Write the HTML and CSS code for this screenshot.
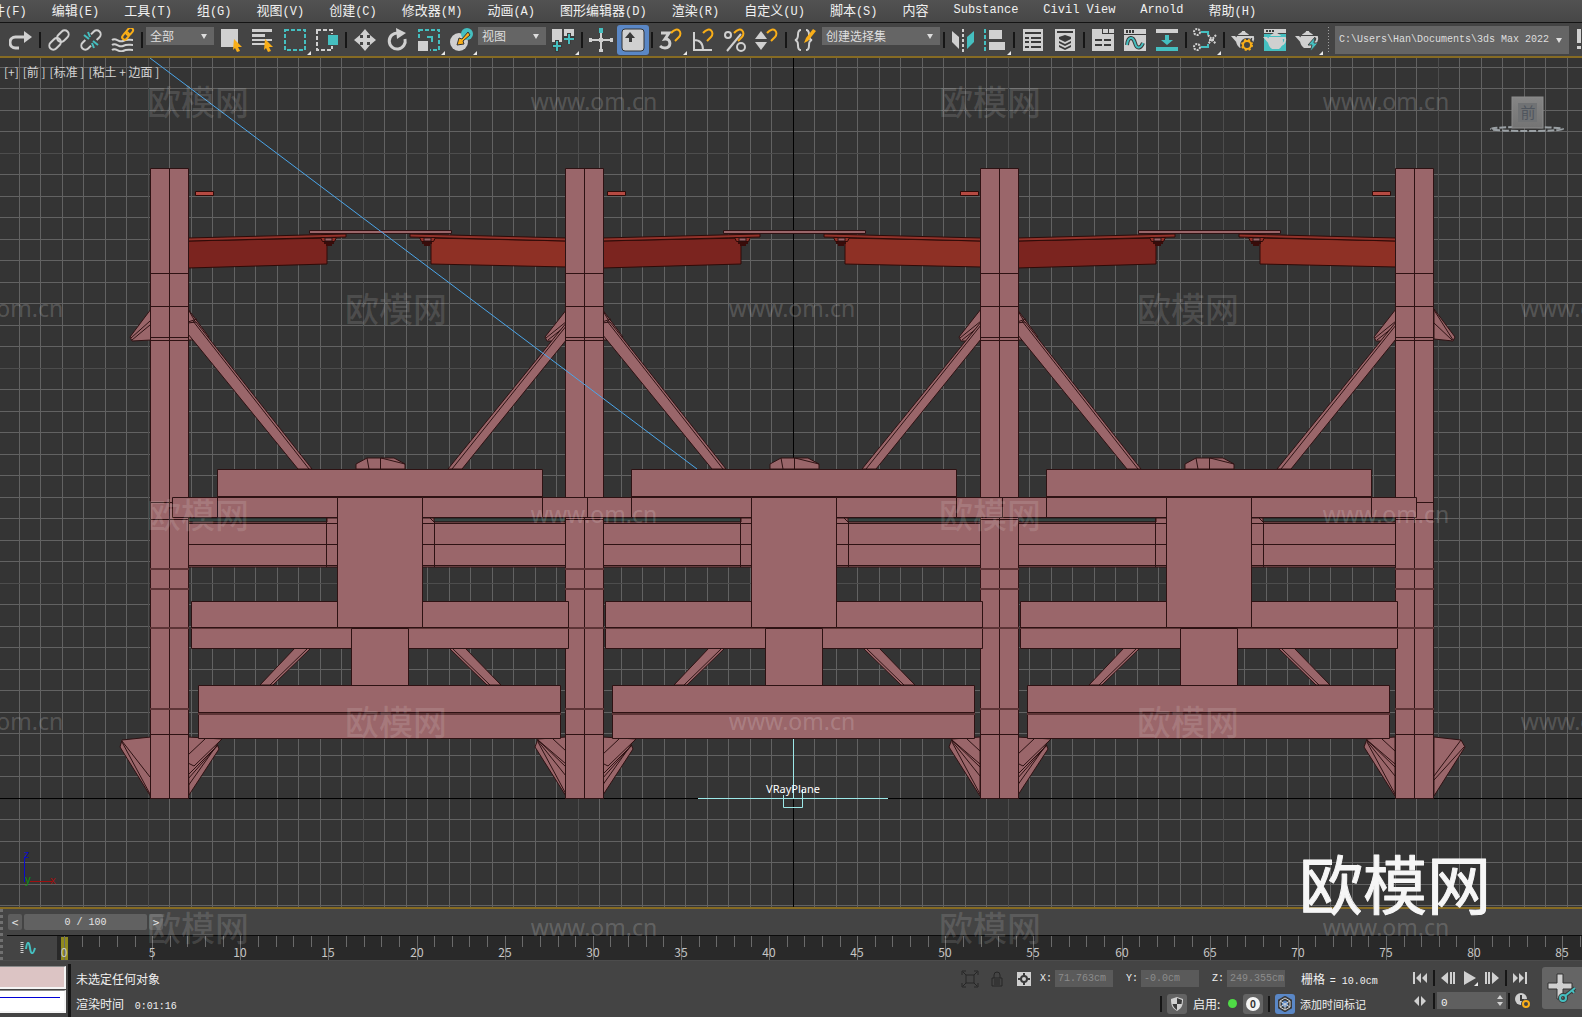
FILE: index.html
```
<!DOCTYPE html>
<html lang="zh-CN">
<head>
    <meta charset="UTF-8" />
    <meta name="viewport" content="width=device-width, initial-scale=1.0" />
    <title>3ds Max 2022</title>
    <link rel="stylesheet" href="styles.css">
</head>
<body>
    <nav class="menubar">
        <a href="#">文件<span>(F)</span></a>
        <a href="#">编辑<span>(E)</span></a>
        <a href="#">工具<span>(T)</span></a>
        <a href="#">组<span>(G)</span></a>
        <a href="#">视图<span>(V)</span></a>
        <a href="#">创建<span>(C)</span></a>
        <a href="#">修改器<span>(M)</span></a>
        <a href="#">动画<span>(A)</span></a>
        <a href="#">图形编辑器<span>(D)</span></a>
        <a href="#">渲染<span>(R)</span></a>
        <a href="#">自定义<span>(U)</span></a>
        <a href="#">脚本<span>(S)</span></a>
        <a href="#">内容</a>
        <a href="#" class="latin">Substance</a>
        <a href="#" class="latin">Civil View</a>
        <a href="#" class="latin">Arnold</a>
        <a href="#">帮助<span>(H)</span></a>
    </nav>

    <div class="toolbar">
        <button class="tool" aria-label="重做"><svg viewBox="0 0 24 24"><path class="ln3" d="M10 20H6.500a4.500 4.500 0 0 1 0-11H16"/><path class="lt" d="M15 3l8 6-8 6z"/></svg></button>
        <i class="sep"></i>
        <button class="tool" aria-label="链接"><svg viewBox="0 0 24 24"><g class="ln2" transform="rotate(-45 12 12)"><rect x="0" y="8" width="13" height="8" rx="4"/><rect x="11" y="8" width="13" height="8" rx="4"/></g></svg></button>
        <button class="tool" aria-label="取消链接"><svg viewBox="0 0 24 24"><g class="ln2" transform="rotate(-45 12 12)"><path d="M8 8H4a4 4 0 0 0 0 8h4M16 8h4a4 4 0 0 1 0 8h-4"/></g><path class="tl2" d="M5 7l5 4M9 4l2 5M19 17l-5-4M15 20l-2-5"/></svg></button>
        <button class="tool" aria-label="绑定到空间扭曲"><svg viewBox="0 0 24 24"><path class="ln2" d="M1 12c4-3 7 3 11 1s6-1 10-1M1 17c4-3 7 3 11 1s6-1 10-1M1 22c4-3 7 3 11 1s6-1 10-1"/><g class="or2" transform="rotate(-50 17 6)"><rect x="10" y="3" width="8" height="5" rx="2.500"/><rect x="16" y="3" width="8" height="5" rx="2.500"/></g></svg></button>
        <i class="sep"></i>
        <div class="drop drop-small"><select aria-label="选择过滤器"><option>全部</option></select></div>
        <button class="tool" aria-label="选择对象"><svg viewBox="0 0 24 24"><path class="lt" d="M2 1h17v18H2z"/><path class="or" d="M15 11l8 8h-4l2 4-3 1-2-4-2 2z"/></svg></button>
        <button class="tool" aria-label="按名称选择"><svg viewBox="0 0 24 24"><path class="lt" d="M1 1h20v3H1zM1 6h13v3H1zM1 11h20v2H1zM1 15h13v2H1z"/><path class="or" d="M14 11l8 8h-4l2 4-3 1-2-4-2 2z"/></svg></button>
        <button class="tool corner" aria-label="矩形选择区域"><svg viewBox="0 0 24 24"><path class="tl2" stroke-dasharray="4 2" d="M2 2h20v20H2z"/></svg></button>
        <button class="tool" aria-label="窗口/交叉"><svg viewBox="0 0 24 24"><path class="ln2" stroke-dasharray="4 2" d="M2 2h15v20H2z"/><path class="bg" d="M11 6h12v12H11z"/><path class="tl" d="M13 7h10v10H13z"/></svg></button>
        <i class="sep"></i>
        <button class="tool" aria-label="选择并移动"><svg viewBox="0 0 24 24"><path class="lt" d="M12 1l5 6h-3v3h3V7l6 5-6 5v-3h-3v3h3l-5 6-5-6h3v-3H7v3l-6-5 6-5v3h3V7H7z"/></svg></button>
        <button class="tool" aria-label="选择并旋转"><svg viewBox="0 0 24 24"><path class="ln3" d="M20 11a8 8 0 1 1-7-6"/><path class="lt" d="M11 0l10 5-9 6z"/></svg></button>
        <button class="tool corner" aria-label="选择并缩放"><svg viewBox="0 0 24 24"><path class="tl2" stroke-dasharray="4 2" d="M2 2h20v20H2z"/><path class="bg" d="M0 12h13v12H0z"/><path class="lt" d="M1 13h10v10H1z"/><path class="tl2" d="M10 9h5v5"/></svg></button>
        <button class="tool corner" aria-label="选择并放置"><svg viewBox="0 0 24 24"><circle class="lt" cx="10" cy="14" r="9"/><circle class="tl" cx="18" cy="6" r="6"/><path class="or" stroke="#333" d="M19 4l2 3-7 6 1 3-7 1 2-7 3 1z"/></svg></button>
        <div class="drop drop-small"><select aria-label="参考坐标系"><option>视图</option></select></div>
        <button class="tool corner" aria-label="使用轴点中心"><svg viewBox="0 0 24 24"><path class="lt" d="M1 1h10v13H1zM13 1h10v10H13z"/><path class="dk4" d="M6 12v12M1 18h10M18 5v11M12 10h12"/><path class="tl2" d="M6 13v10M2 18h8M18 6v10M13 11h10"/></svg></button>
        <i class="sep"></i>
        <button class="tool" aria-label="选择并操纵"><svg viewBox="0 0 24 24"><path class="ln2" d="M12 4v19M1 12h22"/><path class="lt" d="M10 10h4v4h-4zM0 10h3v4H0zM21 10h3v4h-3zM10 21h4v3h-4z"/><path class="tl" d="M10 0h4v5h-4z"/></svg></button>
        <button class="tool active" aria-label="键盘快捷键覆盖"><svg viewBox="0 0 24 24"><rect class="lt" x="1" y="1" width="22" height="22" rx="3" stroke="#333"/><path class="dk" d="M9 4l5 6h-3v4H8v-4H4z"/></svg></button>
        <i class="sep"></i>
        <button class="tool corner" aria-label="捕捉开关"><svg viewBox="0 0 24 24"><path class="ln3" d="M2 5h8l-4 6c6-1 7 9 0 9-2 0-4-1-5-2"/><path class="or2" d="M12 5c7-8 12 0 8 4l-4 4"/></svg></button>
        <button class="tool" aria-label="角度捕捉"><svg viewBox="0 0 24 24"><path class="ln2" d="M3 4v18h18M3 12c6 0 9 4 9 10"/><path class="or2" d="M12 5c7-8 12 0 8 4l-4 4"/></svg></button>
        <button class="tool" aria-label="百分比捕捉"><svg viewBox="0 0 24 24"><circle class="ln2" cx="5" cy="7" r="3"/><circle class="ln2" cx="18" cy="19" r="4"/><path class="ln2" d="M18 6L4 23"/><path class="or2" d="M11 5c7-8 12 0 8 4l-4 4"/></svg></button>
        <button class="tool" aria-label="微调器捕捉"><svg viewBox="0 0 24 24"><path class="lt" d="M6 3l6 8H0zM6 22l6-8H0z"/><path class="or2" d="M12 5c7-8 12 0 8 4l-4 4"/></svg></button>
        <i class="sep"></i>
        <button class="tool" aria-label="编辑命名选择集"><svg viewBox="0 0 24 24"><path class="ln2" d="M8 2C2 2 8 11 2 12c6 1 0 10 6 10M13 2c6 0 0 9 6 10-6 1 0 10-6 10"/><path class="or" d="M20 1l3 2-8 10-4 2 2-5z"/></svg></button>
        <div class="drop drop-medium"><select aria-label="命名选择集"><option>创建选择集</option></select></div>
        <i class="sep"></i>
        <button class="tool" aria-label="镜像"><svg viewBox="0 0 24 24"><path class="lt" d="M1 3l7 6v12l-7-7z"/><path class="tl" d="M23 3l-7 6v12l7-7z"/><path class="ln2" stroke-dasharray="3 2" d="M12 1v23"/></svg></button>
        <button class="tool corner" aria-label="对齐"><svg viewBox="0 0 24 24"><path class="tl2" stroke-dasharray="4 2" d="M2 1v23"/><path class="lt" d="M6 2h13v9H6zM6 14h16v8H6z"/></svg></button>
        <i class="sep"></i>
        <button class="tool" aria-label="场景资源管理器"><svg viewBox="0 0 24 24"><path class="lt" d="M2 1h20v22H2z"/><path class="dk2" d="M4 5h16M4 10h4M10 10h10M4 14h4M10 14h10M4 19h4M10 19h10"/></svg></button>
        <button class="tool" aria-label="层资源管理器"><svg viewBox="0 0 24 24"><path class="lt" d="M2 1h20v22H2z"/><path class="dk" d="M4 3h16v2H4zM6 9l6-2 6 2v2l-6 3-6-3zM6 13l6 3 6-3v2l-6 3-6-3zM6 17l6 3 6-3v2l-6 3-6-3z"/></svg></button>
        <i class="sep"></i>
        <button class="tool" aria-label="显示功能区"><svg viewBox="0 0 24 24"><path class="lt" d="M1 1h22v22H1z"/><path class="dk" d="M11 1h1v5h-1zM17 1h1v4h-1zM11 5h12v1H11z"/><path class="dk2" d="M4 12h7M13 12h7M4 17h7M13 17h7"/></svg></button>
        <button class="tool" aria-label="曲线编辑器"><svg viewBox="0 0 24 24"><path class="lt" d="M1 1h22v22H1z"/><path class="dk" d="M3 2h2v3H3zM6 2h2v3H6zM9 2h2v3H9zM1 6h22v1H1z"/><path class="dk3" d="M4 17c1-9 6-9 8-2s6 5 8 0"/><path class="tl2" d="M4 17c1-9 6-9 8-2s6 5 8 0"/></svg></button>
        <button class="tool" aria-label="切换功能区"><svg viewBox="0 0 24 24"><path class="lt" d="M1 1h22v4H1z"/><path class="tl" d="M1 19h22v4H1zM10 7h4v5h4l-6 5-6-5h4z"/></svg></button>
        <i class="sep"></i>
        <button class="tool corner" aria-label="图解视图"><svg viewBox="0 0 24 24"><g class="ln2" stroke-dasharray="2 1"><circle cx="4" cy="4" r="3"/><circle cx="4" cy="19" r="3"/><path d="M15 7l8 9M23 7l-8 9M16 12h6"/></g><path class="tl2" d="M8 4h7v3M8 19h7v-3"/></svg></button>
        <i class="sep"></i>
        <button class="tool" aria-label="渲染设置"><svg viewBox="0 0 24 24"><use href="#teapot"/><circle cx="16" cy="17" r="7" class="bg"/><circle cx="16" cy="17" r="4" class="or2"/><circle cx="16" cy="17" r="5" class="or2" stroke-dasharray="2 2"/></svg></button>
        <button class="tool" aria-label="渲染帧窗口"><svg viewBox="0 0 24 24"><path class="tl" d="M1 6h22v17H1z"/><path class="lt" d="M1 1h22v4H1z"/><path class="dk" d="M3 2h2v2H3zM6 2h2v2H6zM9 2h2v2H9z"/><use href="#teapot" y="1"/></svg></button>
        <button class="tool corner" aria-label="渲染产品"><svg viewBox="0 0 24 24"><use href="#teapot"/><path class="tl" stroke="#444" d="M20 9l-7 8h4l-2 7 8-9h-4z"/></svg></button>
        <i class="grip"></i>
        <div class="drop drop-path"><select class="latin" aria-label="项目路径"><option>C:\Users\Han\Documents\3ds Max 2022</option></select></div>
        <button class="tool cut" aria-label="更多"><svg viewBox="0 0 24 24"><path class="lt" d="M1 1h4v14H1zM1 18h4v3H1z"/></svg></button>
    </div>

    <main class="viewport">
        <svg class="scene" viewBox="0 58 1582 849" preserveAspectRatio="xMidYMid slice">
            <defs>
                <pattern id="grid" x="793" y="798" width="215" height="215" patternUnits="userSpaceOnUse">
                    <path class="grid-line" d="M21.500 0v215M43.500 0v215M64.500 0v215M86.500 0v215M107.500 0v215M129.500 0v215M150.500 0v215M172.500 0v215M193.500 0v215M0 21.500h215M0 43.500h215M0 64.500h215M0 86.500h215M0 107.500h215M0 129.500h215M0 150.500h215M0 172.500h215M0 193.500h215"/>
                    <path class="grid-major" d="M.5 0v215M0 .5h215"/>
                </pattern>
                <linearGradient id="cubeFace" x1="0" y1="0" x2="0" y2="1"><stop offset="0" stop-color="#858585"/><stop offset="1" stop-color="#747474"/></linearGradient>
                <g id="teapot">
                    <path class="lt" d="M6 8h13c2 4 1 9-3 12H9C5 17 4 12 6 8zM7 7c1-2 4-2 4-4h3c0 2 3 2 4 4zM7 16L0 8h4l4 4z"/>
                    <path class="ln2" d="M18 9h4c1 3-1 6-4 7"/>
                </g>

                <!-- post with its seams -->
                <g id="post">
                    <path class="wood" d="M150.500 168.500h38v630h-38z"/>
                    <path class="edge" d="M169.500 168v630M150 273.500h39M150 306.500h39M150 337.500h39M150 340.500h39M150 519.500h39M150 734.500h39"/>
                    <path class="seam" d="M150 569h39M150 589h39M150 628h39M150 709h39"/>
                </g>

                <!-- things hidden partly behind the posts -->
                <g id="bayBack">
                    <path class="wood" d="M188 737l34 2-5 5 2 5-30 46zM566 737l-28 2-3 8 31 49z"/>
                    <path class="edge" d="M188 755l17-16M188 763l6 3 27-26M188 775l29-29M188 779l30-34M188 786l29-41M538 740l28 24M538 740l28 27M538 741l28 35M538 742l28 52M553 739l13 12"/>
                    <path class="wood" d="M188 309l21 28-3 3h-18zM567 309l-22 28 2 4h20z"/>
                    <path class="edge" d="M188 309l17 30M188 322l9-3M567 321l-21 17M567 325l-19 15"/>
                    <path class="wood" d="M188 323l8-1 116 147h-14L188 334zM567 322L448 469h14l105-130z"/>
                    <path class="edge" d="M193 321l116 148M567 325L452 469"/>
                    <path class="wood" d="M295 648h16l-38 37h-13zM449 648h16l36 37h-14z"/>
                    <path class="edge" d="M308 648l-38 37M452 648l38 37"/>
                    <path class="red-dark" d="M188 241l139-3v26l-139 4z"/>
                    <path class="red-top" d="M188 238l158-4v3l-158 4z"/>
                    <path class="red" d="M431 238l136 3v26l-136-3z"/>
                    <path class="red-top" d="M410 234l157 4v3l-157-4z"/>
                    <path class="wood" d="M309.500 230.500h142v3h-142z"/>
                    <path class="bolt" d="M324 241h10v3h-2v2h-6v-2h-2zM422 241h10v3h-2v2h-6v-2h-2z"/>
                    <path class="red-top" d="M320.500 237.500h16l-2 4h-12zM419.500 237.500h16l-2 4h-12z"/>
                    <path class="wood" d="M325 238h7v3h-7zM424 238h7v3h-7z"/>
                    <path class="shade" d="M188 518h379v4H188z"/>
                    <path class="wood" d="M188 522h139v-4h107v4h133v45H188z"/>
                    <path class="edge" d="M188 523.500h379M188 544.500h379M188 565.500h379M326.500 518v49M434.500 522v45M430 518l4 4"/>
                    <path class="wood" d="M356 469v-5l11-6h27l11 6v5z"/>
                    <path class="edge" d="M367 458l2 11M380.500 458v11M381 458l24 6"/>
                </g>

                <g id="bayFront">
                    <path class="wood" d="M217.500 469.500h325v28h-325z"/>
                    <path class="edge" d="M217 496.500h326M217.500 497v20M542.500 497v20"/>
                    <path class="wood" d="M191.500 601.500h377v47h-377z"/>
                    <path class="seam" d="M191 628h378"/>
                    <path class="edge" d="M191 627.500h378"/>
                    <path class="wood" d="M337.500 497.500h85v130h-85z"/>
                    <path class="wood" d="M351.500 628.500h57v57h-57z"/>
                    <path class="wood" d="M198.500 685.500h362v53h-362z"/>
                    <path class="seam" d="M198 714h363"/>
                    <path class="edge" d="M198 712.500h363"/>
                </g>
            </defs>

            <rect x="-400" y="0" width="2382" height="1100" fill="url(#grid)"/>
            <path class="axis" d="M793.500 58v850M-400 798.500h2382"/>

            <path class="wood" d="M151 309l-21 28 2 4 19-1zM1434 309l21 28-2 4-19-2z"/>
            <path class="edge" d="M150 321l-19 17M150 325l-18 15M1434 310l19 30M1434 323l18 17"/>
            <path class="wood" d="M151 737l-29 3-2 7 31 50zM1434 737l27 3 4 7-31 49z"/>
            <path class="edge" d="M122 741l28 36M122 742l28 52M1461 740l-27 36M1464 747l-30 33"/>
            <use href="#bayBack"/>
            <use href="#bayBack" x="414"/>
            <use href="#bayBack" x="829"/>
            <use href="#post"/>
            <use href="#post" x="415"/>
            <use href="#post" x="830"/>
            <use href="#post" x="1245"/>
            <path class="wood" d="M172.500 497.500h1244v20h-1244z"/>
            <path class="edge" d="M150 502.500h22M1417 502.500h17M587.500 498v19M1002.500 498v19"/>
            <use href="#bayFront"/>
            <use href="#bayFront" x="414"/>
            <use href="#bayFront" x="829"/>
            <path class="red-bright" d="M195.500 191.500h18v4h-18zM607.500 191.500h18v4h-18zM960.500 191.500h18v4h-18zM1372.500 191.500h18v4h-18z"/>

            <path class="target-line" d="M150 58L697 469"/>
            <path class="helper" d="M793.500 739v60M698 798.500h190M783.500 795v12.500h19V789"/>
            <text class="helper-name" x="793" y="793" text-anchor="middle">VRayPlane</text>

            <path class="axis-z" d="M24.500 857v25"/>
            <path class="axis-x" d="M30 881.500h22"/>
            <text class="axis-name axis-z" x="24" y="858">z</text>
            <text class="axis-name axis-y" x="25" y="883">y</text>
            <text class="axis-name axis-x" x="50" y="884">x</text>

            <ellipse class="ring" cx="1527" cy="129" rx="36" ry="2"/>
            <rect x="1512" y="97" width="31" height="31" fill="url(#cubeFace)" stroke="#8c8c8c"/>
            <rect x="1518" y="103" width="19" height="19" fill="#707274"/>
            <text class="cube-name" x="1528" y="118" text-anchor="middle">前</text>
        </svg>
        <p class="view-label"><span>[+]</span><span>[前 ]</span><span>[标准 ]</span><span>[粘土 + 边面 ]</span></p>
    </main>

    <section class="timeline">
        <div class="slider">
            <button aria-label="上一帧">&lt;</button>
            <button class="handle">0 / 100</button>
            <button aria-label="下一帧">&gt;</button>
        </div>
        <div class="track">
            <button class="curve" aria-label="打开迷你曲线编辑器"><svg viewBox="0 0 16 12"><path class="ln3" stroke-dasharray="1 1" d="M2 0v12"/><path class="tl2" d="M6 7c1-8 3-8 4-1s3 7 5 0"/></svg></button>
            <svg class="ruler" id="ruler"><rect class="marker" x="4" y="1" width="7" height="23"/></svg>
        </div>
    </section>

    <footer class="status">
        <div class="listener">
            <div class="macro"></div>
            <div class="script"></div>
        </div>
        <div class="messages">
            <p>未选定任何对象</p>
            <p>渲染时间 <span>0:01:16</span></p>
        </div>
        <div class="coords">
            <div class="row">
                <button class="mini dim" aria-label="孤立当前选择"><svg viewBox="0 0 16 16"><path d="M4 4h8v8H4zM0 4V0h4M12 0h4v4M16 12v4h-4M4 16H0v-4M1 1l3 3M15 1l-3 3M15 15l-3-3M1 15l3-3"/></svg></button>
                <button class="mini dim" aria-label="选择锁定"><svg viewBox="0 0 16 16"><path d="M5 7V4a3 3 0 0 1 6 0v3M3 7h10v8H3zM5 9h6M5 11h6M5 13h6"/></svg></button>
                <button class="mini" aria-label="绝对模式"><svg viewBox="0 0 16 16"><path class="lt" d="M1 1h14v14H1z"/><circle class="dk2" cx="8" cy="8" r="3"/><path class="dk2" d="M8 2v3M8 11v3M2 8h3M11 8h3"/></svg></button>
                <label for="cx">X:</label><input id="cx" type="text" value="71.763cm">
                <label for="cy">Y:</label><input id="cy" type="text" value="-0.0cm">
                <label for="cz">Z:</label><input id="cz" type="text" value="249.355cm">
                <p class="grid-size">栅格 <span>= 10.0cm</span></p>
            </div>
            <div class="row row-second">
                <i class="sep"></i>
                <button class="square" aria-label="安全"><svg viewBox="0 0 16 16"><path class="lt" d="M8 1l6 2c0 6-1 9-6 12C3 12 2 9 2 3z"/><path class="dk" d="M8 2l5 2-.5 4H8zM8 8v6C5 12 4 10 3.500 8z"/></svg></button>
                <p class="enable">启用:</p>
                <i class="dot"></i>
                <button class="square" aria-label="通知 0"><b>0</b></button>
                <i class="sep"></i>
                <button class="square blue" aria-label="时间标记"><svg viewBox="0 0 16 16"><path class="dk3" d="M8 2l5 3v6l-5 3-5-3V5z"/><path class="ln" d="M8 2l5 3v6l-5 3-5-3V5zM3 5l5 3 5-3M8 8v6M3 11l5-3 5 3"/></svg></button>
                <p class="tag">添加时间标记</p>
            </div>
        </div>
        <div class="playback">
            <div class="row">
                <button class="play" aria-label="转至开头"><svg viewBox="0 0 16 16"><path class="lt" d="M1 2h2v12H1zM9 3v10L4 8zM15 3v10l-5-5z"/></svg></button>
                <i class="sep"></i>
                <button class="play" aria-label="上一帧"><svg viewBox="0 0 16 16"><path class="lt" d="M8 2v12L1 8zM10 2h2v12h-2zM13 2h2v12h-2z"/></svg></button>
                <button class="play corner" aria-label="播放动画"><svg viewBox="0 0 16 16"><path class="lt" d="M2 1l12 7-12 7z"/></svg></button>
                <button class="play" aria-label="下一帧"><svg viewBox="0 0 16 16"><path class="lt" d="M8 2v12l7-6zM1 2h2v12H1zM4 2h2v12H4z"/></svg></button>
                <i class="sep"></i>
                <button class="play" aria-label="转至结尾"><svg viewBox="0 0 16 16"><path class="lt" d="M13 2h2v12h-2zM7 3v10l5-5zM1 3v10l5-5z"/></svg></button>
            </div>
            <div class="row">
                <button class="play" aria-label="关键点模式"><svg viewBox="0 0 16 16"><path class="lt" d="M7 3v10L2 8zM9 3v10l5-5z"/></svg></button>
                <i class="sep"></i>
                <div class="spinner"><input type="text" value="0" aria-label="当前帧"></div>
                <i class="sep"></i>
                <button class="play" aria-label="时间配置"><svg viewBox="0 0 16 16"><circle class="lt" cx="6" cy="6" r="6"/><path class="dk2" d="M6 2v5h3"/><circle class="bg" cx="11" cy="11" r="5"/><circle class="or2" cx="11" cy="11" r="3"/></svg></button>
            </div>
        </div>
        <button class="set-key" aria-label="设置关键点"><svg viewBox="0 0 30 30"><path class="lt" stroke="#333" d="M10 1h6v9h9v6h-9v10h-6V16H1v-6h9z"/><path class="dk4" d="M18 23l10-8M25 17l2 3"/><circle class="dk4" cx="16" cy="25" r="3"/><path class="tl2" d="M18 23l10-8M25 17l2 3"/><circle class="tl2" cx="16" cy="25" r="3"/></svg></button>
    </footer>

    <svg class="watermark" viewBox="0 0 1582 1017" preserveAspectRatio="xMidYMid slice" aria-hidden="true">
        <g id="marks"></g>
        <text class="logo" x="1395" y="909" text-anchor="middle">欧模网</text>
    </svg>

    <script>
        const NS = 'http://www.w3.org/2000/svg';

        function add(parent, tag, attrs, text) {
            const el = document.createElementNS(NS, tag);
            for (const key in attrs) el.setAttribute(key, attrs[key]);
            if (text !== undefined) el.textContent = text;
            parent.appendChild(el);
        }

        // frame ruler, one tick per frame and a number on every fifth
        const ruler = document.getElementById('ruler');
        const rulerWidth = ruler.getBoundingClientRect().width;
        for (let frame = 0; frame <= 100; frame++) {
            const x = Math.round(7 + frame * 17.625) + 0.5;
            if (x > rulerWidth) break;
            const major = frame % 5 === 0;
            add(ruler, 'path', { class: 'tick', d: 'M' + x + ' 0v' + (major ? 24 : 11) });
            if (major) add(ruler, 'text', { x: x - 0.5, y: 21, 'text-anchor': 'middle' }, frame);
        }

        // two kinds of mark in turn, every second row shifted
        const marks = document.getElementById('marks');
        for (let row = 0; row < 5; row++) {
            for (let col = 0; col < 5; col++) {
                const x = 198 + col * 396 - (row % 2) * 198;
                const y = 115 + Math.round(row * 206.5);
                const logo = col % 2 === row % 2;
                add(marks, 'text', { class: logo ? 'mark' : 'mark url', x: x, y: logo ? y : y - 5, 'text-anchor': 'middle' }, logo ? '欧模网' : 'www.om.cn');
            }
        }
    </script>
</body>
</html>
```
FILE: styles.css
```
* {
    box-sizing: border-box;
}
body {
    margin: 0;
    height: 100vh;
    display: flex;
    flex-direction: column;
    overflow: hidden;
    position: relative;
    background-color: #444444;
    color: #f0f0f0;
    font-family: "Noto Sans CJK SC", sans-serif;
    font-size: 12px;
}
p {
    margin: 0;
}
button,
input,
select {
    margin: 0;
    padding: 0;
    border: none;
    background: none;
    color: inherit;
    font: inherit;
}
svg {
    display: block;
}
.latin,
.menubar span,
.messages span,
.grid-size span,
.handle,
.coords label,
.coords input,
.spinner input {
    font-family: "Liberation Mono", monospace;
}

/* icon paints */
.lt { fill: #d0d0d0; }
.dk { fill: #3a3a3a; }
.bg { fill: #444444; }
.tl { fill: #45bfc0; }
.or { fill: #f9ae18; }
.ln, .ln2, .ln3, .dk2, .dk3, .dk4, .tl2, .or2 { fill: none; }
.ln, .ln2, .ln3 { stroke: #d0d0d0; }
.dk2, .dk3, .dk4 { stroke: #3a3a3a; }
.tl2 { stroke: #45bfc0; }
.or2 { stroke: #f9ae18; }
.ln2, .dk2, .tl2, .or2 { stroke-width: 2; }
.ln3 { stroke-width: 3; }
.dk3, .dk4 { stroke-width: 4; }

/* menu */
.menubar {
    display: flex;
    gap: 25px;
    height: 23px;
    flex: none;
    background: linear-gradient(#525252, #474747);
    border-bottom: 1px solid #141414;
    white-space: nowrap;
}
.menubar a {
    color: #f0f0f0;
    text-decoration: none;
    font-size: 13px;
    line-height: 19px;
}
.menubar a:first-child {
    margin-left: -21px;
}
.menubar span,
.menubar .latin {
    font-size: 12px;
}
.menubar .latin {
    line-height: 21px;
}

/* main toolbar */
.toolbar {
    display: flex;
    align-items: center;
    flex: none;
    height: 33px;
    padding-left: 5px;
}
.tool {
    width: 32px;
    height: 30px;
    flex: none;
    display: flex;
    align-items: center;
    justify-content: center;
    position: relative;
}
.tool svg {
    width: 24px;
    height: 24px;
}
.tool.active {
    background-color: #5a87c6;
    border-radius: 3px;
}
.tool.cut {
    width: 12px;
    justify-content: flex-start;
    padding-left: 6px;
    overflow: hidden;
}
.tool.cut svg {
    flex: none;
}
.corner::after {
    content: "";
    position: absolute;
    right: 0;
    bottom: 0;
    border-left: 4px solid transparent;
    border-bottom: 4px solid #e8e8e8;
}
.sep {
    flex: none;
    width: 2px;
    height: 16px;
    margin: 0 2px;
    background-color: #161616;
}
.grip {
    flex: none;
    width: 3px;
    height: 28px;
    margin: 0 4px;
    background: radial-gradient(circle, #a0a0a0 1px, transparent 1px);
    background-size: 3px 3px;
}
.drop {
    position: relative;
    flex: none;
    margin: 0 1px;
}
.drop select {
    appearance: none;
    display: block;
    width: 100%;
    height: 18px;
    padding: 0 4px;
    background-color: #656565;
    color: #dedede;
    line-height: 18px;
}
.drop::after {
    content: "";
    position: absolute;
    right: 7px;
    top: 50%;
    margin-top: -2px;
    border: 3px solid transparent;
    border-top: 5px solid #dddddd;
    border-bottom: 0;
}
.drop-small,
.drop-medium {
    align-self: flex-start;
    margin-top: 4px;
    width: 68px;
}
.drop-medium {
    width: 118px;
}
.drop-path {
    flex: 1;
}
.drop-path select {
    height: 28px;
    font-size: 10px;
}

/* viewport */
.viewport {
    flex: 1;
    min-height: 0;
    position: relative;
    border-top: 2px solid #866b23;
    border-bottom: 2px solid #866b23;
    background-color: #343434;
    overflow: hidden;
}
.scene {
    width: 100%;
    height: 100%;
}
.grid-line { stroke: #626262; }
.grid-major { stroke: #4d4d4d; }
.axis { stroke: #000000; }
.wood {
    fill: #9a666a;
    stroke: #2e1213;
}
.edge {
    fill: none;
    stroke: #2e1213;
}
.seam {
    fill: none;
    stroke: #5d3436;
    stroke-width: 2;
}
.shade {
    fill: #344340;
    stroke: #1c1c1c;
}
.red,
.red-dark,
.red-top,
.red-bright {
    stroke: #2e0b08;
}
.red { fill: #8e3025; }
.red-dark { fill: #7b241f; }
.red-top { fill: #93322a; }
.red-bright { fill: #b64a42; }
.bolt { fill: #380c0a; }
.target-line { stroke: #4ba6ea; }
.helper {
    fill: none;
    stroke: #9ce8e8;
}
path.axis-z { stroke: #0a0acc; }
path.axis-x { stroke: #a01010; }
text.axis-z { fill: #0a0acc; }
text.axis-y { fill: #109010; }
text.axis-x { fill: #a01010; }
.helper-name,
.axis-name {
    font-family: "Noto Sans", sans-serif;
    font-size: 11px;
}
.helper-name {
    fill: #ffffff;
}
.ring {
    fill: none;
    stroke: #9aa0a4;
    stroke-width: 2;
    stroke-dasharray: 7 2;
}
.cube-name {
    font-size: 15px;
    fill: #50565e;
}
.view-label {
    position: absolute;
    left: 4px;
    top: 4px;
    display: flex;
    gap: 4px;
    line-height: 20px;
    color: #d4d4d4;
}

/* time slider and track bar */
.timeline {
    flex: none;
    border-left: 3px dotted #707070;
    padding-left: 4px;
}
.slider {
    display: flex;
    gap: 2px;
    padding: 5px 0 5px 1px;
}
.slider button {
    width: 14px;
    height: 16px;
    border-radius: 2px;
    background-color: #5d5d5d;
    color: #e4e4e4;
    line-height: 16px;
}
.slider .handle {
    width: 123px;
    background-color: #616161;
    font-size: 10px;
    line-height: 18px;
}
.track {
    display: flex;
    border-top: 1px solid #0c0c0c;
}
.curve {
    width: 50px;
    height: 24px;
    padding-left: 13px;
}
.curve svg {
    width: 16px;
    height: 12px;
}
.ruler {
    flex: 1;
    height: 24px;
    background-color: #292929;
}
.ruler text {
    font-size: 12px;
    fill: #c6c6c6;
}
.tick {
    stroke: #6a6a6a;
}
.marker {
    fill: #908a1e;
}

/* status bar */
.status {
    flex: none;
    display: flex;
    height: 57px;
    padding-top: 3px;
    border-top: 1px solid #4c4c4c;
}
.listener {
    width: 71px;
    flex: none;
    padding-top: 2px;
    border-right: 3px solid #151515;
}
.macro,
.script {
    width: 66px;
    height: 23px;
    margin-bottom: 1px;
    background-color: #dcc4c4;
    border: solid #f4f4f4;
    border-width: 0 2px 2px 0;
    border-top: 1px solid #8a8a8a;
}
.script {
    background-color: #ffffff;
    padding: 6px 4px 0 0;
}
.script::before {
    content: "";
    display: block;
    height: 1px;
    background-color: #0000d8;
}
.messages {
    flex: 1;
    padding: 2px 0 0 5px;
    line-height: 25px;
}
.messages p {
    height: 25px;
}
.messages span {
    margin-left: 8px;
    font-size: 10px;
}
.row {
    display: flex;
    align-items: center;
    height: 25px;
}
.coords {
    flex: none;
    width: 450px;
    padding-top: 2px;
}
.mini {
    width: 16px;
    height: 16px;
    margin-right: 11px;
}
.mini svg {
    overflow: visible;
}
.dim path {
    fill: none;
    stroke: #262626;
}
.coords label {
    width: 15px;
    flex: none;
    font-size: 10px;
}
.coords .mini + label {
    margin-left: -3px;
}
.coords label + input {
    width: 58px;
    height: 17px;
    margin-right: 13px;
    padding-left: 3px;
    background-color: #5a5a5a;
    color: #8c8c8c;
    font-size: 10px;
}
.grid-size {
    margin-left: 3px;
}
.grid-size span {
    font-size: 10px;
    margin-left: 2px;
}
.row-second {
    padding-left: 196px;
}
.square {
    width: 20px;
    height: 20px;
    margin: 0 3px;
    padding: 2px;
    border-radius: 3px;
    background-color: #636363;
}
.square svg {
    width: 16px;
    height: 16px;
}
.square b {
    display: block;
    width: 14px;
    height: 14px;
    margin: 0 1px;
    border-radius: 50%;
    background-color: #f4f4f4;
    color: #333333;
    font-size: 10px;
    line-height: 14px;
}
.square.blue {
    background-color: #5a87c6;
}
.enable {
    width: 34px;
    margin-left: 3px;
}
.dot {
    width: 9px;
    height: 9px;
    margin: 0 3px 0 1px;
    border-radius: 50%;
    background-color: #4fdc46;
}
.tag {
    margin-left: 2px;
    font-size: 11px;
}
.playback {
    flex: none;
    width: 130px;
    padding-top: 1px;
}
.play {
    width: 16px;
    height: 16px;
    margin: 0 3px;
    position: relative;
}
.playback .play svg {
    width: 16px;
    height: 16px;
}
.play:first-child {
    margin-left: 0;
}
.playback .row + .row {
    height: 21px;
}
.spinner {
    position: relative;
    width: 69px;
    height: 17px;
    background-color: #5f5f5f;
}
.spinner input {
    width: 100%;
    height: 17px;
    padding-left: 4px;
    font-size: 11px;
}
.spinner::before,
.spinner::after {
    content: "";
    position: absolute;
    right: 3px;
    top: 3px;
    border: 3px solid transparent;
    border-top: 0;
    border-bottom: 4px solid #d0d0d0;
}
.spinner::after {
    top: 10px;
    border-bottom: 0;
    border-top: 4px solid #d0d0d0;
}
.set-key {
    flex: none;
    width: 40px;
    height: 42px;
    margin-top: 3px;
    padding-left: 5px;
    border-radius: 3px 0 0 3px;
    background-color: #656565;
}
.set-key svg {
    width: 30px;
    height: 30px;
}

/* marks over the whole window */
.watermark {
    position: absolute;
    left: 0;
    top: 0;
    width: 100%;
    height: 100%;
    pointer-events: none;
}
.mark {
    font-size: 34px;
    font-weight: 500;
    fill: #ffffff;
    fill-opacity: 0.13;
}
.mark.url {
    font-family: "Noto Sans", sans-serif;
    font-size: 23px;
    font-weight: 400;
    fill-opacity: 0.18;
}
.logo {
    font-size: 64px;
    font-weight: 400;
    fill: #f6f6f6;
    stroke: #f6f6f6;
    stroke-width: 1;
    stroke-linejoin: round;
}
```
